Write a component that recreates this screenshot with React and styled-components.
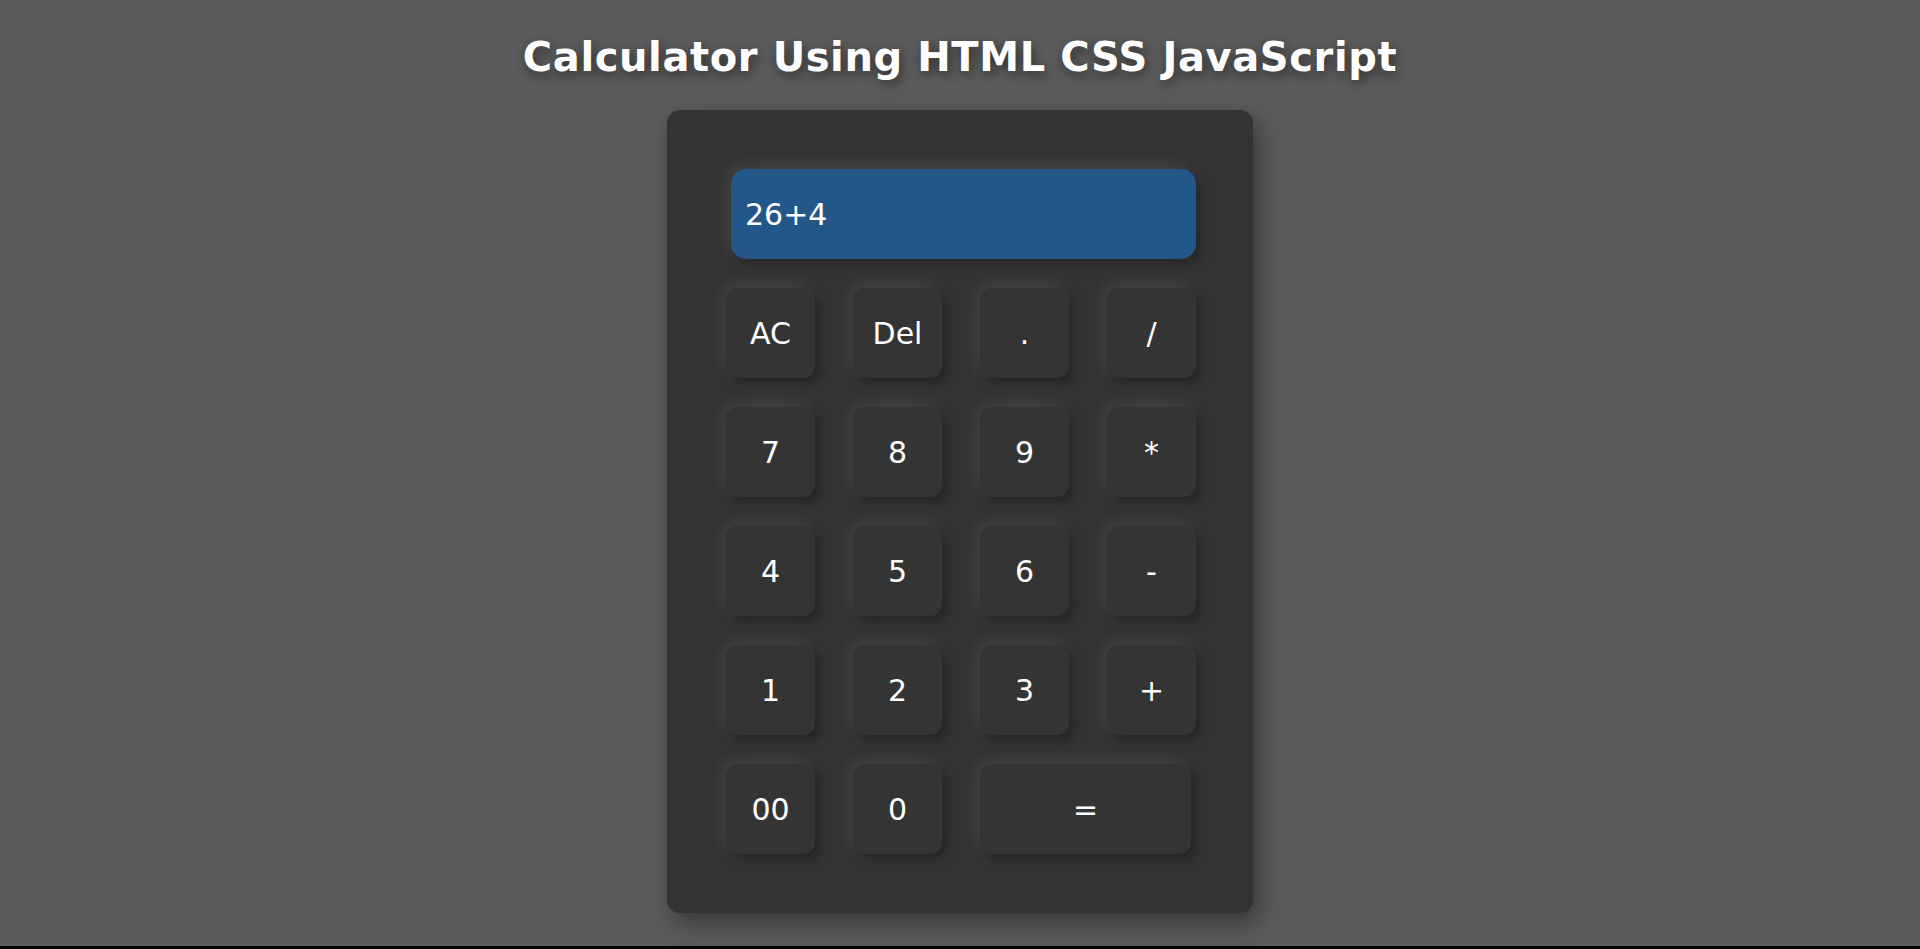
import React from "react";
import styled, { createGlobalStyle } from "styled-components";

const GlobalStyle = createGlobalStyle`
   html {
      background: #000;
   }
   body {
      margin: 0;
      min-height: calc(100vh - 3px);
      background: #5b5b5b;
      font-family: "DejaVu Sans", Verdana, sans-serif;
   }
`;

const Page = styled.div`
   display: flex;
   flex-direction: column;
   align-items: center;
`;

const Title = styled.h1`
   margin: 34px 0 29px;
   font-size: 40px;
   line-height: 47px;
   font-weight: bold;
   letter-spacing: 0.6px;
   color: #fff;
   text-shadow: 2px 4px 12px rgba(0, 0, 0, 0.5);
`;

const Calculator = styled.div`
   box-sizing: border-box;
   width: 586px;
   padding: 59px;
   background: #333333;
   border-radius: 13px;
   box-shadow: 6px 10px 24px rgba(0, 0, 0, 0.4);
`;

const Display = styled.input`
   box-sizing: border-box;
   display: block;
   width: 465px;
   height: 90px;
   margin: 0 0 29px 5px;
   padding: 0 14px;
   border: none;
   outline: none;
   border-radius: 15px;
   background: #23578a;
   color: #fff;
   font-family: "DejaVu Sans", Verdana, sans-serif;
   font-size: 30px;
   box-shadow: 5px 5px 10px rgba(0, 0, 0, 0.3),
      -6px -6px 14px rgba(255, 255, 255, 0.05),
      0 0 24px rgba(255, 255, 255, 0.05);
`;

const Keys = styled.div`
   display: grid;
   grid-template-columns: repeat(4, 89px);
   grid-auto-rows: 90px;
   column-gap: 38px;
   row-gap: 29px;
`;

const Key = styled.button`
   grid-column: span ${(props) => (props.wide ? 2 : 1)};
   width: ${(props) => (props.wide ? "211px" : "89px")};
   height: 90px;
   padding: 0;
   border: none;
   border-radius: 12px;
   background: #343434;
   color: #fff;
   font-family: "DejaVu Sans", Verdana, sans-serif;
   font-size: 30px;
   cursor: pointer;
   box-shadow: 5px 5px 10px rgba(0, 0, 0, 0.32),
      -6px -6px 14px rgba(255, 255, 255, 0.05),
      0 0 24px rgba(255, 255, 255, 0.05);
`;

const keys = [
   "AC", "Del", ".", "/",
   "7", "8", "9", "*",
   "4", "5", "6", "-",
   "1", "2", "3", "+",
   "00", "0", "=",
];

const App = () => {
   return (
      <Page>
         <GlobalStyle />
         <Title>Calculator Using HTML CSS JavaScript</Title>
         <Calculator>
            <Display type="text" value="26+4" readOnly />
            <Keys>
               {keys.map((k) => (
                  <Key key={k} wide={k === "="}>
                     {k}
                  </Key>
               ))}
            </Keys>
         </Calculator>
      </Page>
   );
};

export default App;
